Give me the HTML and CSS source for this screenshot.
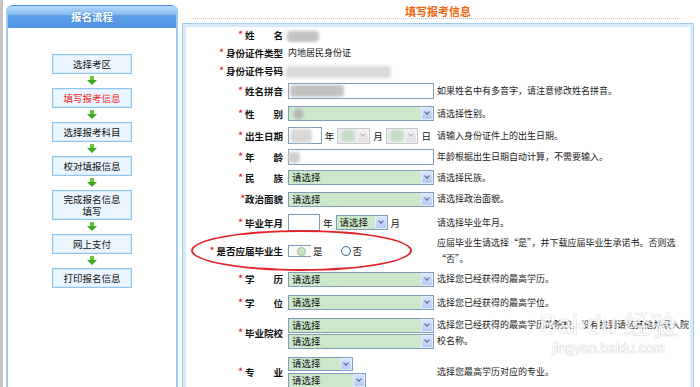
FILE: index.html
```html
<!DOCTYPE html>
<html>
<head>
    <title>填写报考信息</title>
    <meta charset="utf-8">
    <link rel="stylesheet" href="styles.css">
</head>
<body>
<div class="page">

    <div class="edge"></div>

    <div class="side">
        <div class="side-head">报名流程</div>
        <div class="steps">
            <div class="step">选择考区</div>
            <div class="arrow"></div>
            <div class="step current">填写报考信息</div>
            <div class="arrow"></div>
            <div class="step">选择报考科目</div>
            <div class="arrow"></div>
            <div class="step">校对填报信息</div>
            <div class="arrow"></div>
            <div class="step tall">完成报名信息<br>填写</div>
            <div class="arrow"></div>
            <div class="step">网上支付</div>
            <div class="arrow"></div>
            <div class="step">打印报名信息</div>
        </div>
    </div>

    <div class="main">
        <div class="title">填写报考信息</div>
        <div class="dots"></div>

        <div class="form-box">
            <table class="form">
                <colgroup>
                    <col class="c-label">
                    <col class="c-field">
                    <col>
                </colgroup>
                <tr class="h16">
                    <td class="label"><span class="req">*</span> 姓　　名</td>
                    <td class="field"><span class="blur b-name"></span></td>
                    <td class="hint"></td>
                </tr>
                <tr class="h19">
                    <td class="label"><span class="req">*</span> 身份证件类型</td>
                    <td class="field value">内地居民身份证</td>
                    <td class="hint"></td>
                </tr>
                <tr class="h17">
                    <td class="label"><span class="req">*</span> 身份证件号码</td>
                    <td class="field"><span class="blur b-id"></span></td>
                    <td class="hint"></td>
                </tr>
                <tr class="h24">
                    <td class="label"><span class="req">*</span> 姓名拼音</td>
                    <td class="field"><span class="inp"><span class="blur b-py"></span></span></td>
                    <td class="hint">如果姓名中有多音字，请注意修改姓名拼音。</td>
                </tr>
                <tr class="h21">
                    <td class="label"><span class="req">*</span> 性　　别</td>
                    <td class="field"><span class="sel"><span class="txt"><span class="blur b-sex"></span></span><span class="btn"></span></span></td>
                    <td class="hint">请选择性别。</td>
                </tr>
                <tr class="h23">
                    <td class="label"><span class="req">*</span> 出生日期</td>
                    <td class="field">
                        <span class="inline">
                            <span class="inp inp-year"><span class="blur b-year"></span></span>
                            <span class="unit">年</span>
                            <span class="sel sel-date off"><span class="txt"><span class="blur b-md"></span></span><span class="btn"></span></span>
                            <span class="unit">月</span>
                            <span class="sel sel-date off"><span class="txt"><span class="blur b-md"></span></span><span class="btn"></span></span>
                            <span class="unit">日</span>
                        </span>
                    </td>
                    <td class="hint">请输入身份证件上的出生日期。</td>
                </tr>
                <tr class="h20">
                    <td class="label"><span class="req">*</span> 年　　龄</td>
                    <td class="field"><span class="inp"><span class="blur b-age"></span></span></td>
                    <td class="hint">年龄根据出生日期自动计算，不需要输入。</td>
                </tr>
                <tr class="h21">
                    <td class="label"><span class="req">*</span> 民　　族</td>
                    <td class="field"><span class="sel"><span class="txt">请选择</span><span class="btn"></span></span></td>
                    <td class="hint">请选择民族。</td>
                </tr>
                <tr class="h22">
                    <td class="label"><span class="req">*</span>政治面貌</td>
                    <td class="field"><span class="sel"><span class="txt">请选择</span><span class="btn"></span></span></td>
                    <td class="hint">请选择政治面貌。</td>
                </tr>
                <tr class="h25">
                    <td class="label"><span class="req">*</span> 毕业年月</td>
                    <td class="field">
                        <span class="inline">
                            <span class="inp inp-grad"></span>
                            <span class="unit">年</span>
                            <span class="sel sel-s"><span class="txt">请选择</span><span class="btn"></span></span>
                            <span class="unit">月</span>
                        </span>
                    </td>
                    <td class="hint">请选择毕业年月。</td>
                </tr>
                <tr class="h31">
                    <td class="label"><span class="req">*</span> 是否应届毕业生</td>
                    <td class="field">
                        <span class="inline">
                            <span class="radio-box"><span class="radio on"></span></span>
                            <span class="opt">是</span>
                            <span class="radio"></span>
                            <span class="opt">否</span>
                        </span>
                    </td>
                    <td class="hint">应届毕业生请选择“是”，并下载应届毕业生承诺书。否则选<br>“否”。</td>
                </tr>
                <tr class="h24">
                    <td class="label"><span class="req">*</span> 学　　历</td>
                    <td class="field"><span class="sel"><span class="txt">请选择</span><span class="btn"></span></span></td>
                    <td class="hint">选择您已经获得的最高学历。</td>
                </tr>
                <tr class="h23">
                    <td class="label"><span class="req">*</span> 学　　位</td>
                    <td class="field"><span class="sel"><span class="txt">请选择</span><span class="btn"></span></span></td>
                    <td class="hint">选择您已经获得的最高学位。</td>
                </tr>
                <tr class="h38">
                    <td class="label"><span class="req">*</span> 毕业院校</td>
                    <td class="field">
                        <span class="stack">
                            <span class="sel"><span class="txt">请选择</span><span class="btn"></span></span>
                            <span class="sel"><span class="txt">请选择</span><span class="btn"></span></span>
                        </span>
                    </td>
                    <td class="hint">选择您已经获得的最高学历的院校，没有找到请选其他并录入院<br>校名称。</td>
                </tr>
                <tr class="h40">
                    <td class="label"><span class="req">*</span> 专　　业</td>
                    <td class="field">
                        <span class="stack">
                            <span class="sel sel-m"><span class="txt">请选择</span><span class="btn"></span></span>
                            <span class="sel sel-l"><span class="txt">请选择</span><span class="btn"></span></span>
                        </span>
                    </td>
                    <td class="hint">选择您最高学历对应的专业。</td>
                </tr>
            </table>

            <!-- annotation drawn over the screenshot -->
            <div class="ring"></div>

            <div class="watermark">
                <div class="wm-big">Bai<span class="paw">●</span>du 经验</div>
                <div class="wm-small">jingyan.baidu.com</div>
            </div>
        </div>
    </div>

</div>
</body>
</html>
```

FILE: styles.css
```css
*{
    margin:0;
    padding:0;
    box-sizing:border-box;
}

body{
    width:100%;
    height:100vh;
    overflow:hidden;
    background:#fff;
    color:#111;
    font-family:"Noto Sans CJK SC", "Liberation Sans", sans-serif;
    font-size:9.5px;
}

.page{
    display:flex;
    height:100%;
}

.edge{
    flex:none;
    width:3px;
    background:#c4c4c4;
}

/* ---------- left: steps ---------- */

.side{
    flex:none;
    width:172px;
    margin:5px 0 0 3px;
    border:2px solid #9ccaf4;
    border-top:none;
    border-bottom:none;
    border-radius:6px 6px 0 0;
    overflow:hidden;
}

.side-head{
    height:23px;
    border-top:1px solid #4a8fdf;
    border-radius:5px 5px 0 0;
    background:linear-gradient(to bottom, #b4d8fa 0%, #8ec0f4 35%, #5d9ee9 45%, #4e94e4 100%);
    color:#fff;
    font-weight:bold;
    font-size:10.5px;
    line-height:22px;
    text-align:center;
    text-shadow:0 0 2px #2f6fc0;
}

.steps{
    display:flex;
    flex-direction:column;
    align-items:center;
    padding:26px 0 0 0;
}

.step{
    width:80px;
    height:20px;
    border:1px solid #8fc6f2;
    box-shadow:inset 0 0 0 1px #d3eafb;
    background:#eaf5fd;
    text-align:center;
    line-height:18px;
    font-size:9.5px;
    color:#111;
}

.step.current{
    color:#f02525;
}

.step.tall{
    height:30px;
    line-height:12px;
    padding-top:2px;
}

.arrow{
    position:relative;
    width:10px;
    height:14px;
}

.arrow::before{
    content:"";
    position:absolute;
    left:3px;
    top:2px;
    width:4px;
    height:4px;
    background:#6cc63a;
}

.arrow::after{
    content:"";
    position:absolute;
    left:0;
    top:6px;
    border-left:5px solid transparent;
    border-right:5px solid transparent;
    border-top:5px solid #3ea822;
}

/* ---------- right: form ---------- */

.main{
    flex:1;
    display:flex;
    flex-direction:column;
    padding:0 6px 0 4px;
}

.title{
    height:22px;
    padding-top:5px;
    line-height:13px;
    text-align:center;
    font-size:11px;
    font-weight:bold;
    color:#f0650f;
}

.dots{
    margin:0 14px 0 11px;
    border-top:1px dotted #b8b8b8;
}

.form-box{
    position:relative;
    flex:1;
    margin-top:4px;
    border:1px solid #a3cbec;
    box-shadow:inset 0 0 0 3px #d8ebfa;
    padding:3px;
}

.form{
    width:100%;
    border-collapse:collapse;
    table-layout:fixed;
}

.c-label{ width:99px; }
.c-field{ width:149px; }

.form td{
    padding:0;
    vertical-align:middle;
}

.h16{ height:16px; }
.h17{ height:17px; }
.h19{ height:19px; }
.h20{ height:20px; }
.h21{ height:21px; }
.h22{ height:22px; }
.h23{ height:23px; }
.h24{ height:24px; }
.h25{ height:25px; }
.h31{ height:31px; }
.h38{ height:38px; }
.h40{ height:40px; }

.label{
    text-align:right;
    padding-right:2px !important;
    font-weight:bold;
    font-size:9.5px;
    white-space:nowrap;
}

.req{
    color:#e51c1c;
    font-size:9px;
    position:relative;
    top:-1px;
}

.field{
    padding-left:3px !important;
}

.value{
    font-size:9px;
}

.hint{
    padding-left:3px !important;
    font-size:9px;
    line-height:16px;
    color:#1a1a1a;
    white-space:nowrap;
}

/* inputs & selects */

.inp{
    display:flex;
    align-items:center;
    width:146px;
    height:16px;
    border:1px solid #7f9db9;
    background:#fff;
    padding-left:1px;
}

.inp-year{
    width:34px;
    height:17px;
}

.inp-grad{
    width:32px;
    height:17px;
}

.sel{
    display:flex;
    align-items:center;
    width:146px;
    height:15px;
    border:1px solid #7f9db9;
    background:#cbe8cb;
    font-size:9.5px;
}

.sel .txt{
    flex:1;
    overflow:hidden;
    padding-left:3px;
    line-height:13px;
    white-space:nowrap;
}

.sel .btn{
    flex:none;
    position:relative;
    width:12px;
    height:100%;
    border:1px solid #e4ecfd;
    background:linear-gradient(to bottom, #d6e3fd, #b5caf4);
}

.sel .btn::after{
    content:"";
    position:absolute;
    left:3px;
    top:2px;
    width:3px;
    height:3px;
    border-right:1.5px solid #4d6185;
    border-bottom:1.5px solid #4d6185;
    transform:rotate(45deg);
}

.sel.off{
    border-color:#c6c6c6;
    background:#eeeeee;
}

.sel.off .btn{
    border-color:#f4f4f4;
    background:linear-gradient(to bottom, #f2f2f2, #e0e0e0);
}

.sel.off .btn::after{
    border-color:#b4b4b4;
}

.sel-date{
    width:33px;
    height:16px;
}

.sel-s{
    width:52px;
    height:15px;
}

.sel-m{
    width:65px;
    height:14px;
}

.sel-l{
    width:78px;
    height:15px;
}

.inline{
    display:flex;
    align-items:center;
}

.unit{
    padding:0 3px 0 3px;
    font-size:9.5px;
}

.stack{
    display:flex;
    flex-direction:column;
    gap:1px;
}

.stack .sel + .sel.sel-l{
    margin-top:1px;
}

/* radios */

.radio-box{
    display:flex;
    align-items:center;
    width:23px;
    height:12px;
    border:1px solid #7f9db9;
    border-right:none;
    padding-left:8px;
    background:#f6fbf6;
}

.radio{
    display:inline-block;
    width:10px;
    height:10px;
    border:1px solid #38679b;
    border-radius:50%;
    background:radial-gradient(circle at 40% 40%, #ffffff 30%, #dadde4 100%);
    margin-left:18px;
}

.radio.on{
    width:9px;
    height:9px;
    margin-left:0;
    border-color:#a7b7a7;
    background:#c9e6c4;
}

.opt{
    padding-left:2px;
    font-size:9.5px;
}

/* blurred personal data */

.blur{
    display:inline-block;
    background:#c2c2c2;
    border-radius:4px;
    filter:blur(1.5px);
    vertical-align:middle;
}

.b-name{ width:32px; height:11px; margin-left:-1px; }
.b-id{ width:105px; height:12px; margin-left:-2px; background:#dadada; }
.b-py{ width:54px; height:12px; }
.b-sex{ width:9px; height:10px; margin-left:2px; background:#b5b5b5; }
.b-year{ width:22px; height:14px; background:#d8d8d8; }
.b-md{ width:14px; height:12px; background:#c5dcc5; }
.b-age{ width:12px; height:11px; margin-left:-2px; background:#cfcfcf; }

/* red ellipse annotation */

.ring{
    position:absolute;
    left:8px;
    top:206px;
    width:221px;
    height:41px;
    border:2px solid #e3252a;
    border-radius:50%;
}

/* watermark */

.watermark{
    position:absolute;
    left:356px;
    top:286px;
    text-align:center;
    color:#ffffff;
    font-family:"Liberation Sans", sans-serif;
    text-shadow:0 0 1px #a8a8a8, 0 0 1px #a8a8a8;
    opacity:0.8;
}

.wm-big{
    font-size:27px;
    line-height:30px;
}

.paw{
    font-size:14px;
    vertical-align:top;
}

.wm-small{
    font-size:14px;
    line-height:16px;
}
```
